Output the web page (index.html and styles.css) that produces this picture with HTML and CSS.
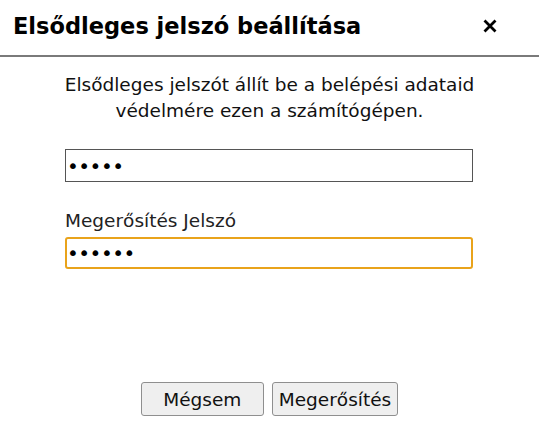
FILE: index.html
```html
<!DOCTYPE html>
<html lang="hu">
<head>
<meta charset="utf-8">
<link rel="stylesheet" href="styles.css">
</head>
<body>
<div class="dialog">
  <div class="header">
    <h1 class="title">Elsődleges jelszó beállítása</h1>
    <span class="close" aria-label="Bezárás"><svg class="close-icon" viewBox="0 0 14 14" width="14" height="14"><path d="M1.5 1.5 L12.5 12.5 M12.5 1.5 L1.5 12.5" stroke="#000" stroke-width="2.8" stroke-linecap="butt" fill="none"/></svg></span>
  </div>
  <div class="content">
    <p class="intro">Elsődleges jelszót állít be a belépési adataid védelmére ezen a számítógépen.</p>
    <div class="form">
      <input class="field" type="password" value="12345">
      <label class="label">Megerősítés Jelszó</label>
      <input class="field focused" type="password" value="123456">
    </div>
  </div>
  <div class="buttons">
    <button class="btn">Mégsem</button>
    <button class="btn">Megerősítés</button>
  </div>
</div>
</body>
</html>
```

FILE: styles.css
```css
html, body {
  margin: 0;
  padding: 0;
  background: #fff;
}
body {
  font-family: "DejaVu Sans", Verdana, sans-serif;
  color: #111;
  width: 539px;
  height: 423px;
  overflow: hidden;
}
.dialog {
  display: flex;
  flex-direction: column;
  height: 423px;
}
.header {
  display: flex;
  align-items: flex-start;
  justify-content: space-between;
  padding: 11px 42px 0 13px;
  border-bottom: 2px solid #7a7a7a;
  box-sizing: content-box;
  height: 44px;
}
.title {
  margin: 0;
  font-size: 22.5px;
  line-height: 30px;
  font-weight: bold;
  color: #000;
}
.close {
  display: flex;
  align-items: center;
  height: 30px;
}
.close-icon {
  display: block;
}
.content {
  flex: 1;
  display: flex;
  flex-direction: column;
  align-items: center;
}
.intro {
  margin: 15px 0 0;
  width: 460px;
  text-align: center;
  font-size: 18.5px;
  line-height: 26px;
}
.form {
  display: flex;
  flex-direction: column;
  width: 408px;
  margin-top: 25px;
  margin-right: 1px;
}
.field {
  box-sizing: border-box;
  width: 408px;
  height: 33px;
  margin: 0;
  padding: 0 1px;
  border: 1px solid #555;
  font-family: "DejaVu Sans", sans-serif;
  font-size: 20px;
  letter-spacing: -0.5px;
  outline: none;
  background: #fff;
  color: #000;
}
.label {
  margin-top: 27px;
  font-size: 18.5px;
  line-height: 24px;
  color: #222;
}
.field.focused {
  margin-top: 4px;
  height: 32px;
  border: 2px solid #e9a31b;
  border-radius: 3px;
  padding: 0 0;
}
.buttons {
  display: flex;
  justify-content: center;
  gap: 8px;
  padding-bottom: 7px;
}
.btn {
  box-sizing: border-box;
  min-width: 123px;
  height: 34px;
  padding: 1px 6px;
  font-family: "DejaVu Sans", sans-serif;
  font-size: 18.5px;
  color: #111;
  background: #efefef;
  border: 1px solid #8f8f8f;
  border-radius: 3px;
}
```
